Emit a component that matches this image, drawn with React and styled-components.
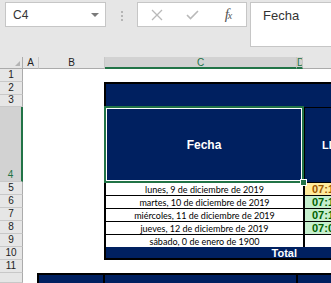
import React from "react";
import styled, { createGlobalStyle } from "styled-components";

const GREEN = "#217346";
const NAVY = "#002060";

const GlobalStyle = createGlobalStyle`
  html, body { margin: 0; padding: 0; background: #fff; overflow: hidden; }
  body { font-family: "Liberation Sans", Arial, sans-serif; }
`;

const Window = styled.div`
  width: 331px;
  height: 283px;
  overflow: hidden;
  display: flex;
  flex-direction: column;
`;

const FormulaBar = styled.div`
  height: 57px;
  flex: none;
  background: #e6e6e6;
  display: flex;
  align-items: flex-start;
  padding: 2px 0 0 5px;
  box-sizing: border-box;
`;

const NameBox = styled.div`
  width: 101px;
  height: 25px;
  box-sizing: border-box;
  background: #fff;
  border: 1px solid #c6c6c6;
  display: flex;
  align-items: center;
  justify-content: space-between;
  padding: 0 6px 0 7px;
  font-size: 12px;
  color: #333;
`;

const Caret = styled.span`
  width: 0;
  height: 0;
  border-left: 4px solid transparent;
  border-right: 4px solid transparent;
  border-top: 4px solid #7a7a7a;
`;

const Grip = styled.div`
  margin: 9px 0 0 15px;
  width: 2px;
  display: flex;
  flex-direction: column;
  gap: 2px;
  span { width: 2px; height: 2px; background: #b5b5b5; }
`;

const ButtonBox = styled.div`
  margin-left: 14px;
  width: 110px;
  height: 25px;
  box-sizing: border-box;
  background: #fff;
  border: 1px solid #c6c6c6;
  display: flex;
  align-items: center;
  padding-left: 13px;
`;

const IconSlot = styled.span`
  width: ${(p) => p.$w}px;
  margin-right: ${(p) => p.$gap}px;
  display: flex;
  align-items: center;
  justify-content: center;
`;

const Fx = styled.span`
  font-family: "Liberation Serif", "Times New Roman", serif;
  font-style: italic;
  font-size: 15px;
  color: #555;
  letter-spacing: -1px;
  sub { font-size: 10px; vertical-align: baseline; }
`;

const FormulaInput = styled.div`
  margin-left: 3px;
  flex: 1;
  height: 45px;
  box-sizing: border-box;
  background: #fff;
  border: 1px solid #c6c6c6;
  border-right: none;
  padding: 5px 0 0 12px;
  font-size: 13px;
  color: #333;
`;

const Sheet = styled.div`
  flex: 1;
  display: grid;
  grid-template-columns: 23px 16px 66px 192px 6px 1fr;
  grid-template-rows: 12px 13px 13px 12px 75px repeat(7, 13px) 1fr;
  background: #fff;
`;

const ColHead = styled.div`
  grid-column: ${(p) => p.$col};
  grid-row: 1;
  box-sizing: border-box;
  background: ${(p) => (p.$selected ? "#d2d2d2" : "#e6e6e6")};
  color: ${(p) => (p.$selected ? GREEN : "#222")};
  border-right: 1px solid #c8c8c8;
  border-bottom: ${(p) => (p.$selected ? `2px solid ${GREEN}` : "1px solid #ababab")};
  font-size: 10px;
  line-height: 11px;
  text-align: center;
  overflow: hidden;
`;

const Corner = styled.div`
  grid-column: 1;
  grid-row: 1;
  box-sizing: border-box;
  background: #e6e6e6;
  border-right: 1px solid #ababab;
  border-bottom: 1px solid #ababab;
  display: flex;
  align-items: flex-end;
  justify-content: flex-end;
  padding: 0 2px 2px 0;
`;

const RowHead = styled.div`
  grid-column: 1;
  grid-row: ${(p) => p.$row};
  box-sizing: border-box;
  background: ${(p) => (p.$selected ? "#d2d2d2" : "#e6e6e6")};
  color: ${(p) => (p.$selected ? GREEN : "#222")};
  border-right: ${(p) => (p.$selected ? `2px solid ${GREEN}` : "1px solid #ababab")};
  border-bottom: 1px solid #c8c8c8;
  display: flex;
  align-items: flex-end;
  justify-content: center;
  font-size: 10px;
  line-height: 12px;
`;

const fills = {
  navy: { bg: NAVY, fg: "#fff" },
  white: { bg: "#fff", fg: "#000" },
  neutral: { bg: "#ffeb9c", fg: "#9c5700" },
  good: { bg: "#c6efce", fg: "#006100" },
};

const Cell = styled.div`
  grid-column: ${(p) => p.$col};
  grid-row: ${(p) => p.$row};
  box-sizing: border-box;
  position: relative;
  background: ${(p) => fills[p.$fill].bg};
  color: ${(p) => fills[p.$fill].fg};
  border-style: solid;
  border-color: #000;
  border-width: ${(p) => p.$b || "0"};
  margin-left: ${(p) => p.$shift || 0}px;
  display: flex;
  align-items: center;
  justify-content: ${(p) => p.$align || "center"};
  padding: ${(p) => p.$pad || "0"};
  font-size: 11px;
  font-weight: ${(p) => (p.$bold ? 700 : 400)};
  white-space: nowrap;
  overflow: visible;
`;

const DateText = styled.span`
  font-family: Lato, "Liberation Sans", Arial, sans-serif;
  font-size: 9px;
  color: #000;
`;

const Selection = styled(Cell)`
  z-index: 2;
  box-shadow: 0 0 0 1px ${GREEN}, inset 0 0 0 1px ${GREEN}, inset 0 0 0 2px #fff;
  font-size: 12px;
`;

const Handle = styled.span`
  position: absolute;
  right: -4px;
  bottom: -4px;
  width: 5px;
  height: 5px;
  background: ${GREEN};
  border: 1px solid #fff;
`;

const dates = [
  "lunes, 9 de diciembre de 2019",
  "martes, 10 de diciembre de 2019",
  "miércoles, 11 de diciembre de 2019",
  "jueves, 12 de diciembre de 2019",
  "sábado, 0 de enero de 1900",
];

const times = [
  { t: "07:14", fill: "neutral" },
  { t: "07:12", fill: "good" },
  { t: "07:13", fill: "good" },
  { t: "07:05", fill: "good" },
  { t: "", fill: "white" },
];

export default function App() {
  return (
    <Window>
      <GlobalStyle />
      <FormulaBar>
        <NameBox>
          C4
          <Caret />
        </NameBox>
        <Grip>
          <span />
          <span />
          <span />
        </Grip>
        <ButtonBox>
          <IconSlot $w={12} $gap={23}>
            <svg width="12" height="12" viewBox="0 0 12 12">
              <path d="M1 1 L11 11 M11 1 L1 11" stroke="#b9b9b9" strokeWidth="1.3" fill="none" />
            </svg>
          </IconSlot>
          <IconSlot $w={13} $gap={22}>
            <svg width="13" height="10" viewBox="0 0 13 10">
              <path d="M1 5 L4.5 8.5 L12 1" stroke="#b9b9b9" strokeWidth="1.6" fill="none" />
            </svg>
          </IconSlot>
          <IconSlot $w={14} $gap={0}>
            <Fx>
              f<sub>x</sub>
            </Fx>
          </IconSlot>
        </ButtonBox>
        <FormulaInput>Fecha</FormulaInput>
      </FormulaBar>

      <Sheet>
        <Corner>
          <svg width="5" height="5" viewBox="0 0 5 5">
            <path d="M5 0 L5 5 L0 5 Z" fill="#b4b4b4" />
          </svg>
        </Corner>
        <ColHead $col={2}>A</ColHead>
        <ColHead $col={3}>B</ColHead>
        <ColHead $col={4} $selected>C</ColHead>
        <ColHead $col={5} $selected>D</ColHead>
        <ColHead $col={6} />

        {[1, 2, 3, 4, 5, 6, 7, 8, 9, 10, 11].map((n) => (
          <RowHead key={n} $row={n + 1} $selected={n === 4}>
            {n}
          </RowHead>
        ))}
        <RowHead $row={13} />

        <Cell $col="4 / 7" $row="3 / 5" $fill="navy" $b="2px 0 0 2px" $shift={-1} />

        <Selection $col="4 / 6" $row={5} $fill="navy" $bold>
          Fecha
          <Handle />
        </Selection>
        <Cell $col={6} $row={5} $fill="navy" $bold $b="1px 0 0 2px" $align="flex-start" $pad="0 0 0 17px">
          LLEGADA
        </Cell>

        {dates.map((d, i) => (
          <Cell key={d} $col="4 / 6" $row={i + 6} $fill="white" $b="1px 0 0 2px" $shift={-1}>
            <DateText>{d}</DateText>
          </Cell>
        ))}
        {times.map((t, i) => (
          <Cell
            key={i}
            $col={6}
            $row={i + 6}
            $fill={t.fill}
            $bold
            $b="1px 0 0 2px"
            $align="flex-start"
            $pad="0 0 0 7px"
          >
            {t.t}
          </Cell>
        ))}

        <Cell $col="4 / 6" $row={11} $fill="navy" $bold $b="0 0 2px 2px" $shift={-1} $align="flex-end" $pad="0 6px 0 0">
          Total
        </Cell>
        <Cell $col={6} $row={11} $fill="navy" $b="0 0 2px 0" />

        <Cell $col={3} $row={13} $fill="navy" $b="2px 2px 0 2px" $shift={-2} />
        <Cell $col={4} $row={13} $fill="navy" $b="2px 0 0 0" />
        <Cell $col="5 / 7" $row={13} $fill="navy" $b="2px 0 0 2px" $shift={-1} />
      </Sheet>
    </Window>
  );
}
